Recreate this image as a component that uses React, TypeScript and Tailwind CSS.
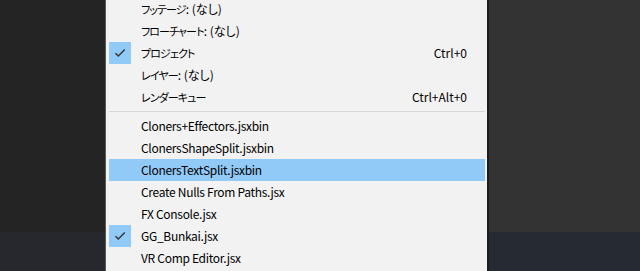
import React from "react";

type Item = {
  label: string;
  suffix?: string;
  shortcut?: string;
  checked?: boolean;
  active?: boolean;
  jp?: boolean;
};

const topItems: Item[] = [
  { label: "フッテージ", suffix: ": (なし)", jp: true },
  { label: "フローチャート", suffix: ": (なし)", jp: true },
  { label: "プロジェクト", shortcut: "Ctrl+0", checked: true, jp: true },
  { label: "レイヤー", suffix: ": (なし)", jp: true },
  { label: "レンダーキュー", shortcut: "Ctrl+Alt+0", jp: true },
];

const scriptItems: Item[] = [
  { label: "Cloners+Effectors.jsxbin" },
  { label: "ClonersShapeSplit.jsxbin" },
  { label: "ClonersTextSplit.jsxbin", active: true },
  { label: "Create Nulls From Paths.jsx" },
  { label: "FX Console.jsx" },
  { label: "GG_Bunkai.jsx", checked: true },
  { label: "VR Comp Editor.jsx" },
];

function Check() {
  return (
    <svg width="12" height="12" viewBox="0 0 12 12" fill="none">
      <path d="M1.5 6.2 L4.3 9 L10.8 2.6" stroke="#333" strokeWidth="1.4" />
    </svg>
  );
}

function Row({ item }: { item: Item }) {
  return (
    <div
      className={
        "flex h-[22px] items-center " + (item.active ? "bg-[#91c9f7]" : "")
      }
    >
      <div
        className={
          "flex h-[22px] w-[22px] shrink-0 items-center justify-center " +
          (item.checked ? "bg-[#91c9f7]" : "")
        }
      >
        {item.checked && <Check />}
      </div>
      <span className="ml-[10px] flex-1 whitespace-pre">
        <span
          className={
            item.jp
              ? "text-[11px] tracking-[-0.9px] [font-feature-settings:'palt']"
              : "tracking-[-0.3px]"
          }
        >
          {item.label}
        </span>
        {item.suffix && (
          <span className="[font-feature-settings:'palt']">{item.suffix}</span>
        )}
      </span>
      {item.shortcut && (
        <span className="mr-[18px] whitespace-nowrap">{item.shortcut}</span>
      )}
    </div>
  );
}

export default function App() {
  return (
    <div className="flex h-[271px] w-[640px] overflow-hidden font-['Noto_Sans_CJK_JP','Noto_Sans',sans-serif] text-[12px] text-black">
      <div className="flex w-[105px] shrink-0 flex-col">
        <div className="h-[232px] bg-[#242424]" />
        <div className="flex-1 bg-[#27282d]" />
      </div>

      <div className="-mt-[2px] w-[384px] shrink-0 border-l border-r-2 border-l-[#5a5a5a] border-r-[#1c1c1c] bg-[#f2f2f2] pl-[3px] pr-[2px]">
        {topItems.map((it) => (
          <Row key={it.label} item={it} />
        ))}
        <div className="flex h-[7px] items-center">
          <div className="h-px w-full bg-[#d7d7d7]" />
        </div>
        {scriptItems.map((it) => (
          <Row key={it.label} item={it} />
        ))}
      </div>

      <div className="flex flex-1 flex-col">
        <div className="h-[232px] bg-[#333333]" />
        <div className="flex-1 bg-[#262a33]" />
      </div>
    </div>
  );
}
